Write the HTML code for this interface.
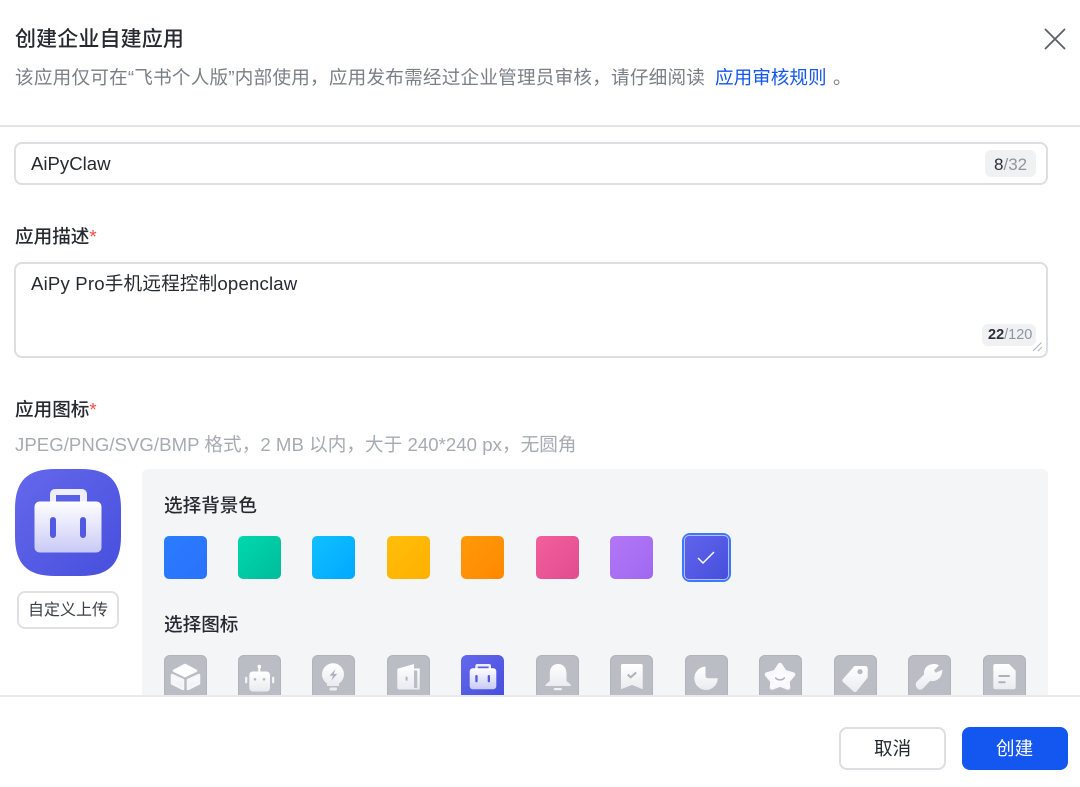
<!DOCTYPE html>
<html><head><meta charset="utf-8"><style>
html,body{margin:0;padding:0;background:#fff}
body{width:1080px;height:787px;position:relative;overflow:hidden;font-family:"Liberation Sans","Noto Sans CJK SC",sans-serif;color:#262a30}
.t{position:absolute;white-space:nowrap;line-height:1}
.box{position:absolute;box-sizing:border-box;border:2px solid #dcdee1;border-radius:8px;background:#fff}
.sw{position:absolute;top:536px;width:43px;height:43px;border-radius:5px}
.ic{position:absolute;top:655px;width:43px;height:41px;box-sizing:border-box;background:#babdc4;border-radius:6px 6px 0 0;overflow:hidden;box-shadow:inset 0 0 0 1px #b1b4bb}
.ic svg{position:absolute;left:0;top:0;width:43px;height:41px;filter:blur(.3px)}
.req{color:#f54a45}
</style></head><body>
<svg width="0" height="0" style="position:absolute"><defs>
<linearGradient id="w" x1="0" y1="0" x2="0" y2="1"><stop offset="0" stop-color="#fff"/><stop offset="1" stop-color="#eaebef"/></linearGradient>
<linearGradient id="w2" x1="0" y1="0" x2="0" y2="1"><stop offset="0" stop-color="#fff"/><stop offset="1" stop-color="#c8caf6"/></linearGradient>
<linearGradient id="p" x1="0" y1="0" x2="1" y2="1"><stop offset="0" stop-color="#6468ec"/><stop offset="1" stop-color="#474fdc"/></linearGradient>
</defs></svg>

<div class="t" style="left:15px;top:29px;font-size:21px;font-weight:500;letter-spacing:.13px">创建企业自建应用</div>
<div class="t" style="left:15px;top:69px;font-size:18.6px;color:#7a7f87;letter-spacing:.22px">该应用仅可在“飞书个人版”内部使用，应用发布需经过企业管理员审核，请仔细阅读</div>
<div class="t" style="left:715px;top:69px;font-size:18.6px;color:#1456f0">应用审核规则</div>
<div class="t" style="left:833px;top:69px;font-size:18.6px;color:#7a7f87">。</div>
<svg style="position:absolute;left:1044px;top:28px" width="22" height="22" viewBox="0 0 22 22"><path d="M1.500 1.500L20.500 20.500M20.500 1.500L1.500 20.500" stroke="#5a5f66" stroke-width="1.800" stroke-linecap="round"/></svg>
<div style="position:absolute;left:0;top:125px;width:1080px;height:2px;background:#e3e4e7"></div>

<div class="box" style="left:14px;top:142px;width:1034px;height:43px"></div>
<div class="t" style="left:31px;top:155px;font-size:18.6px">AiPyClaw</div>
<div style="position:absolute;left:985px;top:150px;width:51px;height:27px;background:#f0f1f3;border-radius:6px"></div>
<div class="t" style="left:994px;top:156px;font-size:17px;color:#2b2f36">8<span style="color:#8f959e">/32</span></div>

<div class="t" style="left:15px;top:228px;font-size:18.6px;font-weight:500">应用描述<span class="req" style="font-weight:400">*</span></div>
<div class="box" style="left:14px;top:262px;width:1034px;height:96px"></div>
<div class="t" style="left:31px;top:275px;font-size:18.6px;letter-spacing:.18px">AiPy Pro手机远程控制openclaw</div>
<div style="position:absolute;left:982px;top:324px;width:54px;height:22px;background:#f0f1f3;border-radius:6px"></div>
<div class="t" style="left:988px;top:328px;font-size:14.500px;font-weight:700;color:#2b2f36">22<span style="color:#8f959e;font-weight:400">/120</span></div>
<svg style="position:absolute;left:1032px;top:341px" width="11" height="11"><path d="M1 10L9.500 1.500M6 10L9.800 6.200" stroke="#b0b3b9" stroke-width="1"/></svg>

<div class="t" style="left:15px;top:401px;font-size:18.6px;font-weight:500">应用图标<span class="req" style="font-weight:400">*</span></div>
<div class="t" style="left:15px;top:436px;font-size:18.6px;color:#a6abb3;letter-spacing:.04px">JPEG/PNG/SVG/BMP 格式，2 MB 以内，大于 240*240 px，无圆角</div>

<svg style="position:absolute;left:15px;top:469px" width="106" height="107" viewBox="0 0 106 107">
<path d="M40 0H66C94 0 106 12 106 40V67C106 95 94 107 66 107H40C12 107 0 95 0 67V40C0 12 12 0 40 0Z" fill="url(#p)"/>
<path fill-rule="evenodd" d="M40 20H67a5 5 0 0 1 5 5V34H35V25a5 5 0 0 1 5-5zM41 26V34H65V26z" fill="#eeeefb"/>
<rect x="19.500" y="32.500" width="67" height="51" rx="5" fill="url(#w2)"/>
<rect x="35" y="48" width="6" height="21" rx="3" fill="#5258e0"/><rect x="65" y="48" width="6" height="21" rx="3" fill="#5258e0"/>
</svg>
<div class="box" style="left:17px;top:591px;width:102px;height:38px;border-color:#e0e1e4;border-radius:8px"></div>
<div class="t" style="left:28px;top:603px;font-size:16px;color:#3a3f46">自定义上传</div>

<div style="position:absolute;left:142px;top:469px;width:906px;height:227px;background:#f4f5f7;border-radius:6px 6px 0 0"></div>
<div class="t" style="left:164px;top:497px;font-size:18.6px;font-weight:500">选择背景色</div>
<div class="sw" style="left:164px;background:linear-gradient(135deg,#2b7cff,#2a72fb)"></div>
<div class="sw" style="left:238px;background:linear-gradient(135deg,#00d7ad,#00bd9b)"></div>
<div class="sw" style="left:312px;background:linear-gradient(135deg,#12bfff,#00a9ff)"></div>
<div class="sw" style="left:387px;background:linear-gradient(135deg,#ffbe0a,#ffb000)"></div>
<div class="sw" style="left:461px;background:linear-gradient(135deg,#ff9a0a,#ff8800)"></div>
<div class="sw" style="left:536px;background:linear-gradient(135deg,#f45f9c,#e04d8f)"></div>
<div class="sw" style="left:610px;background:linear-gradient(135deg,#b377f5,#9f69f0)"></div>
<div style="position:absolute;left:682px;top:533px;width:49px;height:49px;box-sizing:border-box;border:2px solid #3b78ff;border-radius:8px"></div>
<div style="position:absolute;left:684px;top:535px;width:45px;height:45px;box-sizing:border-box;border:1px solid #b8bdf5;border-radius:5px;background:linear-gradient(135deg,#6064ec,#474fdc)"></div>
<svg style="position:absolute;left:696px;top:550px" width="20" height="16"><path d="M2 8l5 5L18 2" fill="none" stroke="#fff" stroke-width="1.500"/></svg>

<div class="t" style="left:164px;top:616px;font-size:18.6px;font-weight:500">选择图标</div>

<div class="ic" style="left:164px"><svg viewBox="0 0 43 41"><path d="M21 10L32 15.700L21 21L10 15.700Z" fill="#fff" stroke="#fff" stroke-width="2.500" stroke-linejoin="round"/><path d="M8 20L19 25V34L8 28.500ZM35 20L24 25V34L35 28.500Z" fill="url(#w)" stroke="#f6f6f8" stroke-width="2.500" stroke-linejoin="round"/></svg></div>
<div class="ic" style="left:238px"><svg viewBox="0 0 43 41"><circle cx="21.300" cy="11.500" r="1.800" fill="#fff"/><rect x="20.300" y="12" width="2" height="5" fill="#fff"/><rect x="11.300" y="16.500" width="20.700" height="20" rx="3.500" fill="url(#w)"/><rect x="7" y="21.700" width="2.300" height="6.600" rx="1.100" fill="#f2f3f5"/><rect x="34" y="21.700" width="2.300" height="6.600" rx="1.100" fill="#f2f3f5"/><circle cx="17" cy="24.300" r="1.300" fill="#b5b8c0"/><circle cx="26" cy="24.300" r="1.300" fill="#b5b8c0"/></svg></div>
<div class="ic" style="left:312px"><svg viewBox="0 0 43 41"><path d="M21 8.300a11 11 0 0 1 6 20.200V31h-12v-2.500A11 11 0 0 1 21 8.300z" fill="url(#w)"/><rect x="17.500" y="32.500" width="7.500" height="3" rx="1.200" fill="#eee"/><path d="M23.500 14l-6 6.700h3.500l-1.700 5 6-6.800h-3.500z" fill="#b0b3bb"/></svg></div>
<div class="ic" style="left:387px"><svg viewBox="0 0 43 41"><path d="M12.300 13.300L27 9V34.500H12.300a2 2 0 0 1-2-2V15a2 2 0 0 1 2-1.700z" fill="url(#w)"/><path d="M27 13.500H32.700V34.500H27V33H30.300V15.500H27Z" fill="url(#w)"/><rect x="18.700" y="21.700" width="1.800" height="4" fill="#aeb1b9"/></svg></div>
<div class="ic" style="left:461px;background:linear-gradient(135deg,#6468ec,#474fdc);box-shadow:none"><svg viewBox="0 0 43 41"><path fill-rule="evenodd" d="M16.300 9H28a2 2 0 0 1 2 2V15H14.300V11a2 2 0 0 1 2-2zM16.700 11.500V15H27.600V11.500z" fill="#eeeefb"/><rect x="8.700" y="13.300" width="26.600" height="21" rx="3" fill="url(#w2)"/><rect x="14.300" y="20" width="2.300" height="7.300" rx="1.100" fill="#5258e0"/><rect x="26.700" y="20" width="2.300" height="7.300" rx="1.100" fill="#5258e0"/></svg></div>
<div class="ic" style="left:536px"><svg viewBox="0 0 43 41"><path d="M22 9c5.500 0 8.500 4 8.500 9.500v7c0 1.500 4.500 3 4.500 5.500H9.300c0-2.500 4.500-4 4.500-5.500v-7C13.800 13 16.500 9 22 9z" fill="url(#w)"/><rect x="17.700" y="33" width="8.300" height="2.200" rx="1.100" fill="#f0f1f3"/></svg></div>
<div class="ic" style="left:610px"><svg viewBox="0 0 43 41"><path d="M12.500 9H31a1.700 1.700 0 0 1 1.700 1.700V34.300L22 30 11 34.300V10.700A1.700 1.700 0 0 1 12.500 9z" fill="url(#w)"/><path d="M17.700 19.500l3 2.800 5.500-4.800" fill="none" stroke="#aeb1b9" stroke-width="2"/></svg></div>
<div class="ic" style="left:685px"><svg viewBox="0 0 43 41"><path d="M20.500 11.600A11.700 11.700 0 1 0 32.700 23.800V23.300H23a2.500 2.500 0 0 1-2.500-2.500Z" fill="url(#w)"/></svg></div>
<div class="ic" style="left:759px"><svg viewBox="0 0 43 41"><path d="M21 10L25.500 17L34 19.500L28.500 26L29 32.500L21 29.500L13 32.500L13.500 26L8 19.500L16.500 17Z" fill="#fbfbfc" stroke="#f9f9fb" stroke-width="4.500" stroke-linejoin="round"/><path d="M16.700 23c2 2.500 6.500 2.500 8.600 0" fill="none" stroke="#aeb1b9" stroke-width="1.600" stroke-linecap="round"/></svg></div>
<div class="ic" style="left:834px"><svg viewBox="0 0 43 41"><path d="M20.500 11H31a2.500 2.500 0 0 1 2.700 2.500V22.500L22.500 36.500a2 2 0 0 1-3 0L9 27a2 2 0 0 1 0-3z" fill="url(#w)"/><circle cx="26" cy="16.700" r="2.600" fill="#b5b8c0"/></svg></div>
<div class="ic" style="left:908px"><svg viewBox="0 0 43 41"><path d="M25.500 9C19 9.500 15.500 13.500 16 19.500L9 26.500C5.500 30 10 37 14.500 34L22 26C29 27 34.500 22.500 34.300 14.800L27.800 17.800L26 15.500L31 10.200C29.500 9.300 27.500 8.800 25.500 9Z" fill="url(#w)"/></svg></div>
<div class="ic" style="left:983px"><svg viewBox="0 0 43 41"><path d="M12.300 9H26L32.700 15.700V32.300a2 2 0 0 1-2 2H12.300a2 2 0 0 1-2-2V11a2 2 0 0 1 2-2z" fill="url(#w)"/><rect x="15.300" y="20" width="11.700" height="2" rx="1" fill="#aeb1b9"/><rect x="15.300" y="26.300" width="7.400" height="2" rx="1" fill="#aeb1b9"/></svg></div>

<div style="position:absolute;left:0;top:695px;width:1080px;height:92px;background:#fff;border-top:2px solid #e9eaec;box-sizing:border-box"></div>
<div class="box" style="left:839px;top:727px;width:107px;height:43px;border-radius:8px"></div>
<div class="t" style="left:874px;top:740px;font-size:18.6px">取消</div>
<div style="position:absolute;left:962px;top:727px;width:106px;height:43px;background:#1456f0;border-radius:8px"></div>
<div class="t" style="left:996px;top:740px;font-size:18.6px;color:#fff">创建</div>
</body></html>
